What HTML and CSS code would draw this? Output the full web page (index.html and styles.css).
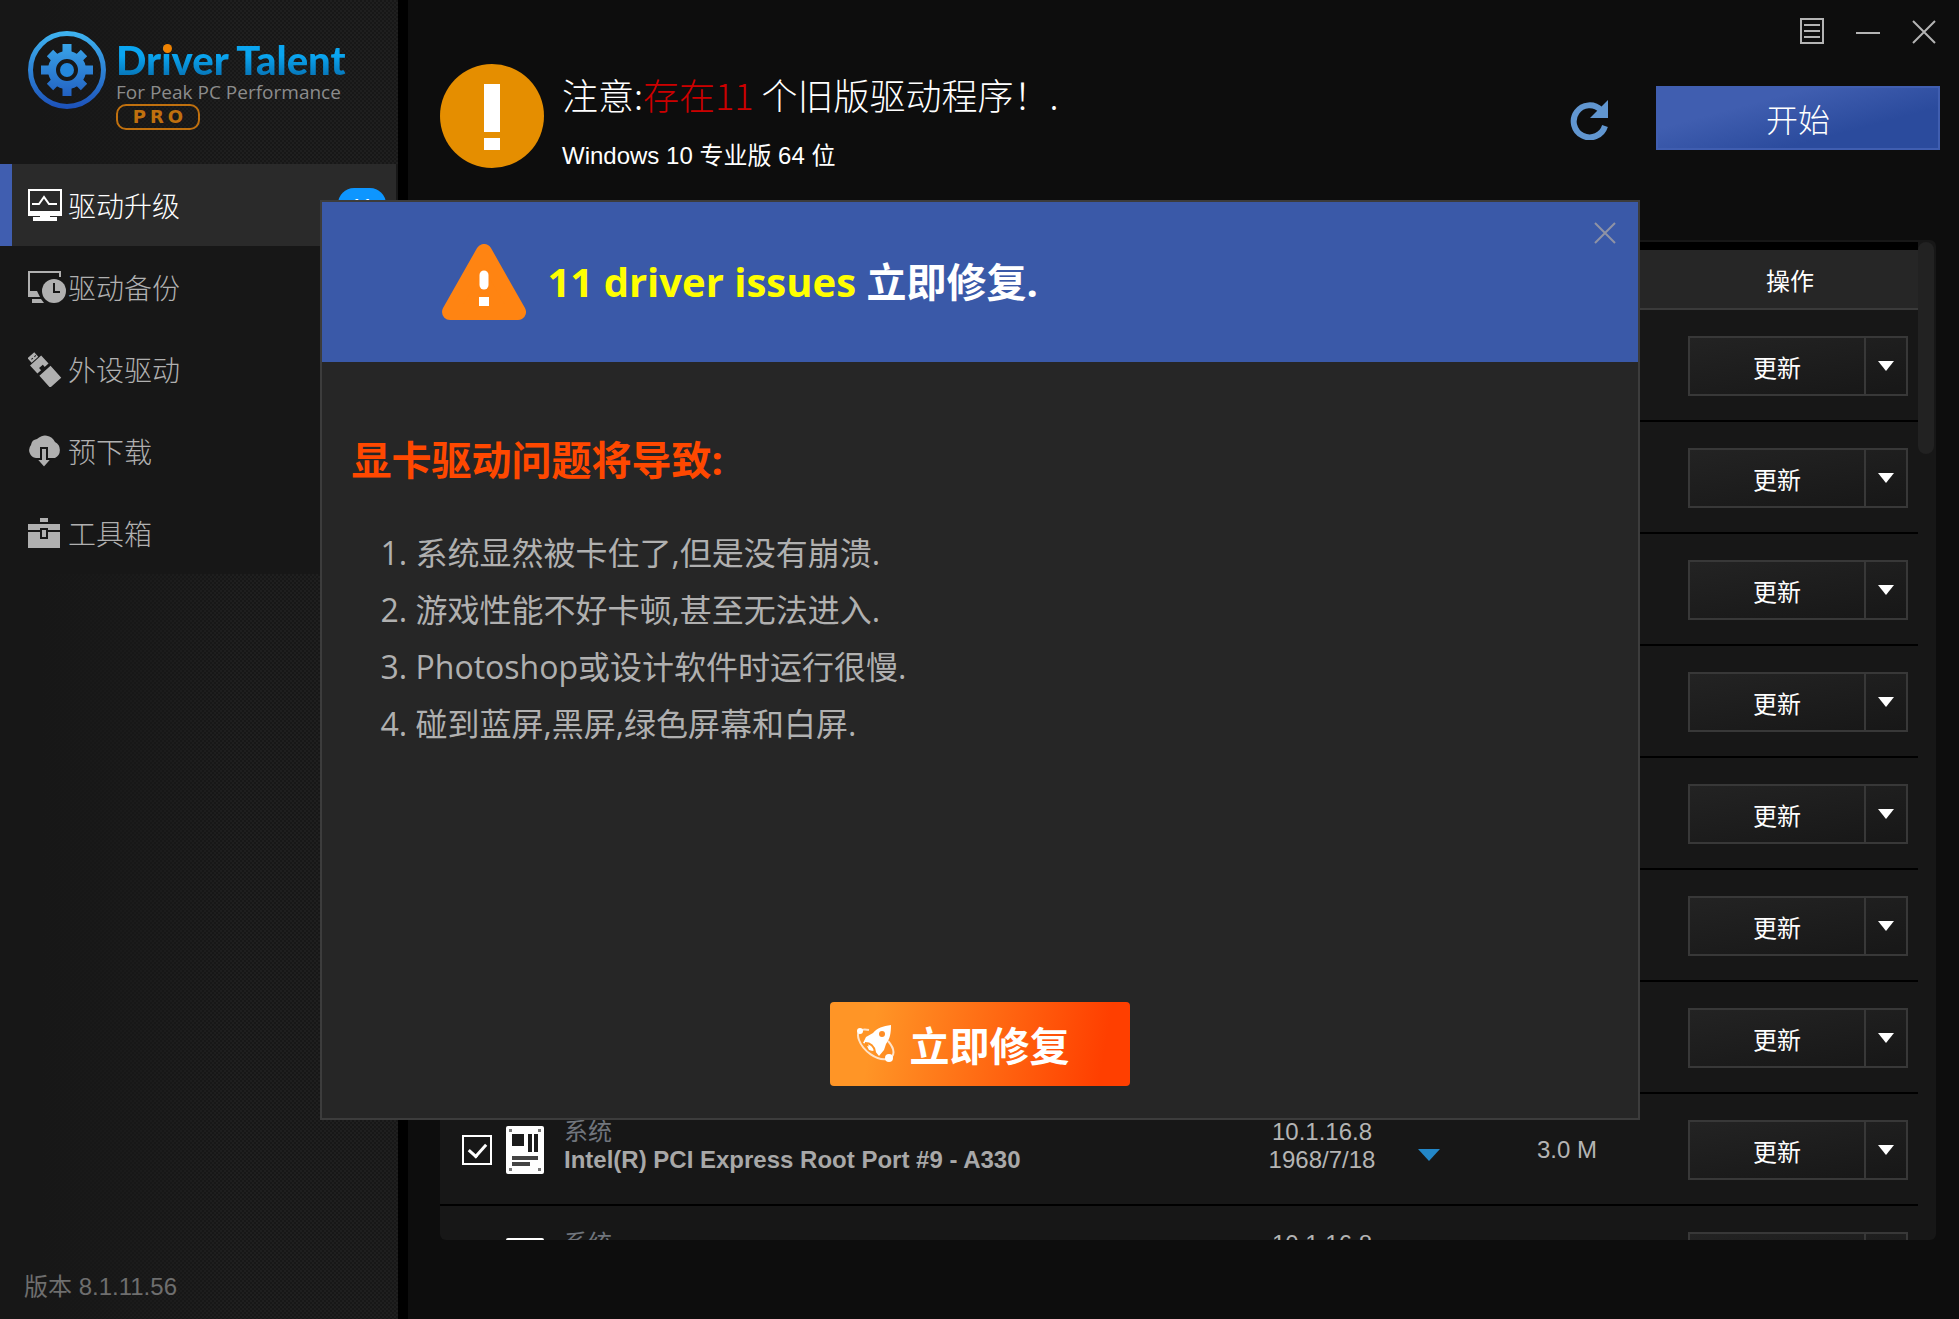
FILE: index.html
```html
<!DOCTYPE html>
<html lang="zh-CN">
  <head>
    <meta charset="UTF-8" />
    <meta name="viewport" content="width=device-width, initial-scale=1.0" />
    <title>Driver Talent</title>
    <link rel="stylesheet" href="styles.css">
  </head>
  <body>
    <div class="app">
      <aside class="sidebar">
        <div class="logo">
          <svg class="logo-icon" viewBox="0 0 80 80" width="80" height="80">
            <defs>
              <linearGradient id="logo-blue" gradientUnits="userSpaceOnUse" x1="0" y1="0" x2="0" y2="80">
                <stop offset="0" stop-color="#3fb6f2" />
                <stop offset="1" stop-color="#1c4fb8" />
              </linearGradient>
            </defs>
            <g fill="none" stroke="url(#logo-blue)">
              <circle cx="40" cy="40" r="36.500" stroke-width="5" />
              <circle cx="40" cy="40" r="15" stroke-width="8" />
              <path d="M40 14v9M40 57v9M14 40h9M57 40h9M23 23l6 6M51 51l6 6M57 23l-6 6M29 51l-6 6" stroke-width="9" />
            </g>
            <circle cx="40" cy="40" r="7" fill="#2488dc" />
          </svg>
          <div class="logo-text">
            <div class="logo-name">Driver Talent</div>
            <div class="logo-tagline">For Peak PC Performance</div>
            <div class="logo-pro">PRO</div>
          </div>
        </div>

        <nav class="nav">
          <a class="nav-item active" href="#">
            <svg viewBox="0 0 40 36" width="40" height="36">
              <path d="M1 3h32v25H1z" fill="none" stroke="currentColor" stroke-width="2" />
              <path d="M1 24h32v4H1zM12 27h10v4H12zM5 30h24v4H5z" fill="currentColor" />
              <path d="M4 17h7l5-7 5 7h8" fill="none" stroke="currentColor" stroke-width="2" />
            </svg>
            驱动升级
            <span class="badge">11</span>
          </a>
          <a class="nav-item" href="#">
            <svg viewBox="0 0 40 36" width="40" height="36">
              <path d="M32 8V3H1v23" fill="none" stroke="currentColor" stroke-width="2" />
              <path d="M0 22h9l3 6H0zM4 30h9l3 4H4z" fill="currentColor" />
              <circle cx="26" cy="22" r="12" fill="currentColor" />
              <path d="M26 14v9h6" fill="none" stroke="#171717" stroke-width="2" />
            </svg>
            驱动备份
          </a>
          <a class="nav-item" href="#">
            <svg viewBox="0 0 40 36" width="40" height="36">
              <g transform="rotate(-42 16 18)" fill="currentColor">
                <path d="M11 -1h9v6h-9zM8 6h15v11H8zM8 20h15v16H8z" />
                <path d="M13 2h2v1h-2zM17 2h2v1h-2zM13 14h5v4h-5z" fill="#171717" />
              </g>
            </svg>
            外设驱动
          </a>
          <a class="nav-item" href="#">
            <svg viewBox="0 0 40 36" width="40" height="36">
              <path d="M8 25a8 8 0 0 1-5-13 7 7 0 0 1 6-6 11 11 0 0 1 18 3 9 9 0 0 1 0 16z" fill="currentColor" />
              <path d="M13 15h6v11h5l-8 9-8-9h5z" fill="currentColor" stroke="#171717" stroke-width="2" />
            </svg>
            预下载
          </a>
          <a class="nav-item" href="#">
            <svg viewBox="0 0 40 36" width="40" height="36">
              <path d="M12 3h8v4h-8zM0 9h32v6H0zM0 17h32v16H0z" fill="currentColor" />
              <path d="M13 14h6v9h-6z" fill="currentColor" stroke="#171717" stroke-width="2" />
            </svg>
            工具箱
          </a>
        </nav>

        <div class="version">版本 8.1.11.56</div>
      </aside>

      <main class="main">
        <div class="titlebar">
          <button type="button" aria-label="菜单">
            <svg viewBox="0 0 24 26" width="24" height="26">
              <path d="M1 1h22v24H1zM4 7h16M4 13h16M4 19h16" />
            </svg>
          </button>
          <button type="button" aria-label="最小化">
            <svg viewBox="0 0 24 26" width="24" height="26">
              <path d="M0 15h24" />
            </svg>
          </button>
          <button type="button" aria-label="关闭">
            <svg viewBox="0 0 24 26" width="24" height="26">
              <path d="M1 3l22 22M23 3L1 25" />
            </svg>
          </button>
        </div>

        <div class="status">
          <svg class="status-icon" viewBox="0 0 104 104" width="104" height="104">
            <circle cx="52" cy="52" r="52" fill="#e58e00" />
            <path d="M44 20h16v48H44zM44 74h16v12H44z" fill="#fff" />
          </svg>
          <div class="status-text">
            <h1>注意:<span>存在11</span> 个旧版驱动程序！.</h1>
            <p>Windows 10 专业版 64 位</p>
          </div>
          <button type="button" class="refresh-btn" aria-label="刷新">
            <svg viewBox="0 0 40 40" width="40" height="40">
              <path d="M35 26A16 16 0 1 1 31 10" fill="none" stroke="#6196d0" stroke-width="6" />
              <path d="M38 0v18H20z" fill="#6196d0" />
            </svg>
          </button>
          <button type="button" class="start-btn">开始</button>
        </div>

        <div class="panel">
          <table>
            <colgroup>
              <col class="col-check">
              <col class="col-icon">
              <col>
              <col class="col-version">
              <col class="col-arrow">
              <col class="col-size">
              <col class="col-action">
            </colgroup>
            <thead>
              <tr>
                <th colspan="6"></th>
                <th>操作</th>
              </tr>
            </thead>
            <tbody id="driver-body">
              <!-- Rows will be added here -->
            </tbody>
          </table>
          <div class="scrollbar"></div>
        </div>
      </main>
    </div>

    <div class="overlay">
      <dialog class="modal" open>
        <div class="modal-header">
          <svg viewBox="0 0 84 76" width="84" height="76">
            <path d="M42 8L76 68H8z" fill="#ff8412" stroke="#ff8412" stroke-width="16" stroke-linejoin="round" />
            <path d="M42 31v10" stroke="#fff" stroke-width="9" stroke-linecap="round" />
            <path d="M37 53h10v9H37z" fill="#fff" />
          </svg>
          <h2><span>11 driver issues</span> 立即修复.</h2>
          <button type="button" class="modal-close" aria-label="关闭">
            <svg viewBox="0 0 22 22" width="22" height="22">
              <path d="M1 1l20 20M21 1L1 21" />
            </svg>
          </button>
        </div>
        <div class="modal-body">
          <h3>显卡驱动问题将导致:</h3>
          <ol>
            <li>系统显然被卡住了,但是没有崩溃.</li>
            <li>游戏性能不好卡顿,甚至无法进入.</li>
            <li>Photoshop或设计软件时运行很慢.</li>
            <li>碰到蓝屏,黑屏,绿色屏幕和白屏.</li>
          </ol>
          <button type="button" class="fix-btn">
            <svg viewBox="0 0 40 40" width="40" height="40">
              <path d="M13 6C4 4 0 8 3 16c4 11 18 21 28 19 9-2 8-10 1-18" fill="none" stroke="#ffe3c8" stroke-width="2" />
              <path d="M35 1c-8 1-14 3-18 8l-7 4-3 6 5 1 2 6 5 1 4 5 5-6 2-6c4-5 5-11 5-19z" fill="#fff" />
              <circle cx="26" cy="10" r="3" fill="#ff8d24" />
              <circle cx="4" cy="7" r="3" fill="#fff" />
              <circle cx="33" cy="34" r="4" fill="#fff" />
              <path d="M9 19c6 0 9 3 10 9" fill="none" stroke="#ff9526" stroke-width="2" />
              <path d="M11 22l5 1 1 4-4-1z" fill="#fff" />
            </svg>
            立即修复
          </button>
        </div>
      </dialog>
    </div>

    <script>
      let driverBody = document.getElementById("driver-body");
      let empty = { type: "", name: "", version: "", date: "", size: "" };
      let rootPort = {
        type: "系统",
        name: "Intel(R) PCI Express Root Port #9 - A330",
        version: "10.1.16.8",
        date: "1968/7/18",
        size: "3.0 M",
      };
      let drivers = [empty, empty, empty, empty, empty, empty, empty, rootPort, rootPort];

      drivers.forEach((driver) => {
        let row = document.createElement("tr");
        row.innerHTML = `
          <td class="check-cell"><input type="checkbox" aria-label="选择驱动" checked></td>
          <td class="icon-cell">
            <svg viewBox="0 0 38 48" width="38" height="48">
              <rect width="38" height="48" rx="2" fill="#fff" />
              <path d="M6 8h12v12H6zM22 8h4v18h-4zM28 8h4v18h-4z" fill="#1b1b1b" />
              <path d="M6 30h26v4H6zM6 36h18v4H6z" fill="#444" />
              <path d="M3 3h3v3H3zM32 3h3v3h-3zM3 42h3v3H3zM32 42h3v3h-3z" fill="#777" />
            </svg>
          </td>
          <td class="name-cell">
            <div class="driver-type">${driver.type}</div>
            <div class="driver-name">${driver.name}</div>
          </td>
          <td class="version-cell">${driver.version}<br>${driver.date}</td>
          <td class="arrow-cell"><svg viewBox="0 0 22 12" width="22" height="12"><path d="M0 0h22L11 12z" fill="#2387c8" /></svg></td>
          <td class="size-cell">${driver.size}</td>
          <td class="action-cell">
            <div class="split-btn">
              <button type="button" class="update-btn">更新</button>
              <button type="button" class="more-btn" aria-label="更多">
                <svg viewBox="0 0 16 10" width="16" height="10"><path d="M0 0h16L8 10z" fill="#fff" /></svg>
              </button>
            </div>
          </td>
        `;
        driverBody.appendChild(row);
      });
    </script>
  </body>
</html>
```
FILE: styles.css
```css
* {
  box-sizing: border-box;
}

body {
  margin: 0;
  background: #0d0d0d;
  color: #fff;
  font-family: "Liberation Sans", "Noto Sans CJK SC", sans-serif;
  font-size: 24px;
}

h1, h2, h3, p {
  margin: 0;
}

button {
  padding: 0;
  border: none;
  background: none;
  color: inherit;
  font-family: inherit;
  font-size: 24px;
  cursor: pointer;
}

svg {
  display: block;
  flex-shrink: 0;
}

.app {
  display: flex;
  height: 100vh;
  overflow: hidden;
}

/* Sidebar */
.sidebar {
  display: flex;
  flex-direction: column;
  width: 408px;
  flex-shrink: 0;
  border-right: 10px solid #000;
  background:
    linear-gradient(90deg, #171717 10%, transparent 60%),
    repeating-conic-gradient(#1f1f1f 0 25%, #171717 0 50%) 0 0 / 4px 4px;
}

.logo {
  display: flex;
  gap: 9px;
  height: 164px;
  padding: 30px 0 0 27px;
}

.logo-text {
  padding-top: 8px;
}

.logo-name {
  position: relative;
  width: max-content;
  font-family: Lato, sans-serif;
  font-size: 40px;
  font-weight: 900;
  line-height: 44px;
  white-space: nowrap;
  color: transparent;
  background: linear-gradient(#0aa5f0 40%, #0672b4 90%);
  background-clip: text;
}

/* orange dot on the i */
.logo-name::after {
  content: "";
  position: absolute;
  left: 47px;
  top: 6px;
  width: 9px;
  height: 9px;
  border-radius: 50%;
  background: #f08200;
}

.logo-tagline {
  font-family: "Open Sans", sans-serif;
  font-size: 19px;
  line-height: 20px;
  color: #8c8c8c;
  white-space: nowrap;
}

.logo-pro {
  width: 84px;
  height: 26px;
  margin-top: 2px;
  padding-left: 4px;
  border: 2px solid #c0700e;
  border-radius: 10px;
  color: #c0700e;
  font-family: "DejaVu Sans", sans-serif;
  font-size: 18px;
  font-weight: bold;
  line-height: 22px;
  letter-spacing: 4px;
  text-align: center;
}

.nav {
  background: #171717;
}

.nav-item {
  display: flex;
  align-items: center;
  height: 82px;
  padding: 0 10px 0 28px;
  color: #b0b0b0;
  font-family: "Noto Sans CJK SC", sans-serif;
  font-size: 28px;
  font-weight: 300;
  line-height: 40px;
  text-decoration: none;
}

.nav-item.active {
  margin-right: 2px;
  padding-left: 16px;
  border-left: 12px solid #405eb0;
  background: #2a2a2a;
  color: #fff;
}

.badge {
  align-self: flex-start;
  width: 48px;
  height: 32px;
  margin: 24px 0 0 auto;
  border-radius: 16px;
  background: #0d96ff;
  font-family: "Liberation Sans", sans-serif;
  font-size: 22px;
  line-height: 38px;
  text-align: center;
}

.version {
  margin-top: auto;
  padding: 0 24px 16px;
  color: #6e6e6e;
  line-height: 32px;
}

/* Main area */
.main {
  display: flex;
  flex: 1;
  flex-direction: column;
  min-width: 0;
  padding: 18px 23px 79px 32px;
}

.titlebar {
  display: flex;
  justify-content: flex-end;
  gap: 32px;
  height: 46px;
}

.titlebar button {
  height: 26px;
}

.titlebar svg {
  fill: none;
  stroke: #b4b4b4;
  stroke-width: 2;
}

.status {
  display: flex;
  align-items: center;
  height: 108px;
  margin: 0 -4px 68px 0;
}

.status-icon {
  align-self: flex-start;
}

.status-text {
  flex: 1;
  align-self: flex-start;
  padding-left: 18px;
}

.status-text h1 {
  font-family: "Noto Sans CJK SC", sans-serif;
  font-size: 36px;
  font-weight: 300;
  line-height: 60px;
}

.status-text h1 span {
  color: #cc0000;
}

.status-text p {
  padding-top: 14px;
  line-height: 36px;
}

.refresh-btn {
  margin: 4px 46px 0 0;
}

.start-btn {
  width: 284px;
  height: 64px;
  border: 2px solid #405eb0;
  background: linear-gradient(165deg, #405eb0 30%, #2b4b9d 70%);
  font-size: 32px;
  font-weight: 300;
}

.panel {
  display: flex;
  flex: 1;
  align-items: flex-start;
  min-height: 0;
  overflow: hidden;
  padding-top: 2px;
  border-radius: 6px;
  background: #171717;
}

table {
  flex: 1;
  width: 100%;
  border-collapse: separate;
  border-spacing: 0;
  table-layout: fixed;
}

.col-check {
  width: 66px;
}

.col-icon {
  width: 58px;
}

.col-version {
  width: 180px;
}

.col-arrow {
  width: 60px;
}

.col-size {
  width: 190px;
}

.col-action {
  width: 256px;
}

th {
  height: 68px;
  padding: 0;
  border-top: 8px solid #000;
  border-bottom: 2px solid #3a3a3a;
  background: #262626;
  font-weight: normal;
}

td {
  height: 112px;
  padding: 2px 0 0;
  border-bottom: 2px solid #000;
  color: #b4b4b4;
  line-height: 28px;
}

.check-cell {
  padding-left: 22px;
}

.check-cell input {
  display: grid;
  place-content: center;
  appearance: none;
  width: 30px;
  height: 30px;
  margin: 0;
  border: 2px solid #fff;
}

.check-cell input:checked::before {
  content: "";
  width: 8px;
  height: 14px;
  margin-bottom: 4px;
  border: solid #fff;
  border-width: 0 3px 3px 0;
  transform: rotate(42deg);
}

.name-cell {
  padding-bottom: 8px;
  white-space: nowrap;
}

.driver-type {
  color: #70757d;
}

.driver-name {
  color: #a8a8a8;
  font-weight: bold;
}

.version-cell {
  padding-bottom: 8px;
  text-align: center;
}

.arrow-cell {
  padding: 12px 0 0 6px;
}

.size-cell {
  text-align: center;
}

.action-cell {
  padding-right: 10px;
}

.split-btn {
  display: flex;
  width: 220px;
  height: 60px;
  margin-left: auto;
  border: 2px solid #383838;
  background: linear-gradient(170deg, #232323, #171717);
  color: #fff;
}

.update-btn {
  flex: 1;
}

.more-btn {
  display: flex;
  align-items: center;
  justify-content: center;
  width: 42px;
  border-left: 2px solid #383838;
}

.scrollbar {
  width: 16px;
  height: 212px;
  margin-right: 2px;
  border-radius: 8px;
  background: #222;
}

/* Modal */
.overlay {
  position: fixed;
  inset: 0;
  display: flex;
  align-items: center;
  justify-content: center;
}

.modal {
  position: static;
  display: flex;
  flex-direction: column;
  width: 1320px;
  max-width: 90%;
  height: 920px;
  margin: 0;
  padding: 0;
  border: 2px solid #3c3c3c;
  background: #262626;
  color: #fff;
  font-family: "Open Sans", "Noto Sans CJK SC", sans-serif;
}

.modal-header {
  display: flex;
  align-items: center;
  gap: 22px;
  height: 160px;
  padding-left: 120px;
  background: #3a59a8;
}

.modal-header h2 {
  font-size: 40px;
  line-height: 56px;
}

.modal-header span {
  color: #ffff00;
}

.modal-close {
  align-self: flex-start;
  margin: 20px 22px 0 auto;
}

.modal-close svg {
  fill: none;
  stroke: #8f93a5;
  stroke-width: 2;
}

.modal-body {
  display: flex;
  flex: 1;
  flex-direction: column;
  padding: 68px 30px 32px;
}

.modal-body h3 {
  color: #ff4800;
  font-size: 40px;
  line-height: 60px;
}

.modal-body ol {
  margin: 34px 0 0;
  padding-left: 64px;
  color: #b0b0b0;
  font-size: 32px;
  line-height: 57px;
}

.fix-btn {
  display: flex;
  align-items: center;
  align-self: center;
  gap: 14px;
  width: 300px;
  height: 84px;
  margin-top: auto;
  padding-left: 26px;
  border-radius: 4px;
  background: linear-gradient(100deg, #ff9526 15%, #ff3f00 90%);
  font-size: 40px;
  font-weight: bold;
}
```
